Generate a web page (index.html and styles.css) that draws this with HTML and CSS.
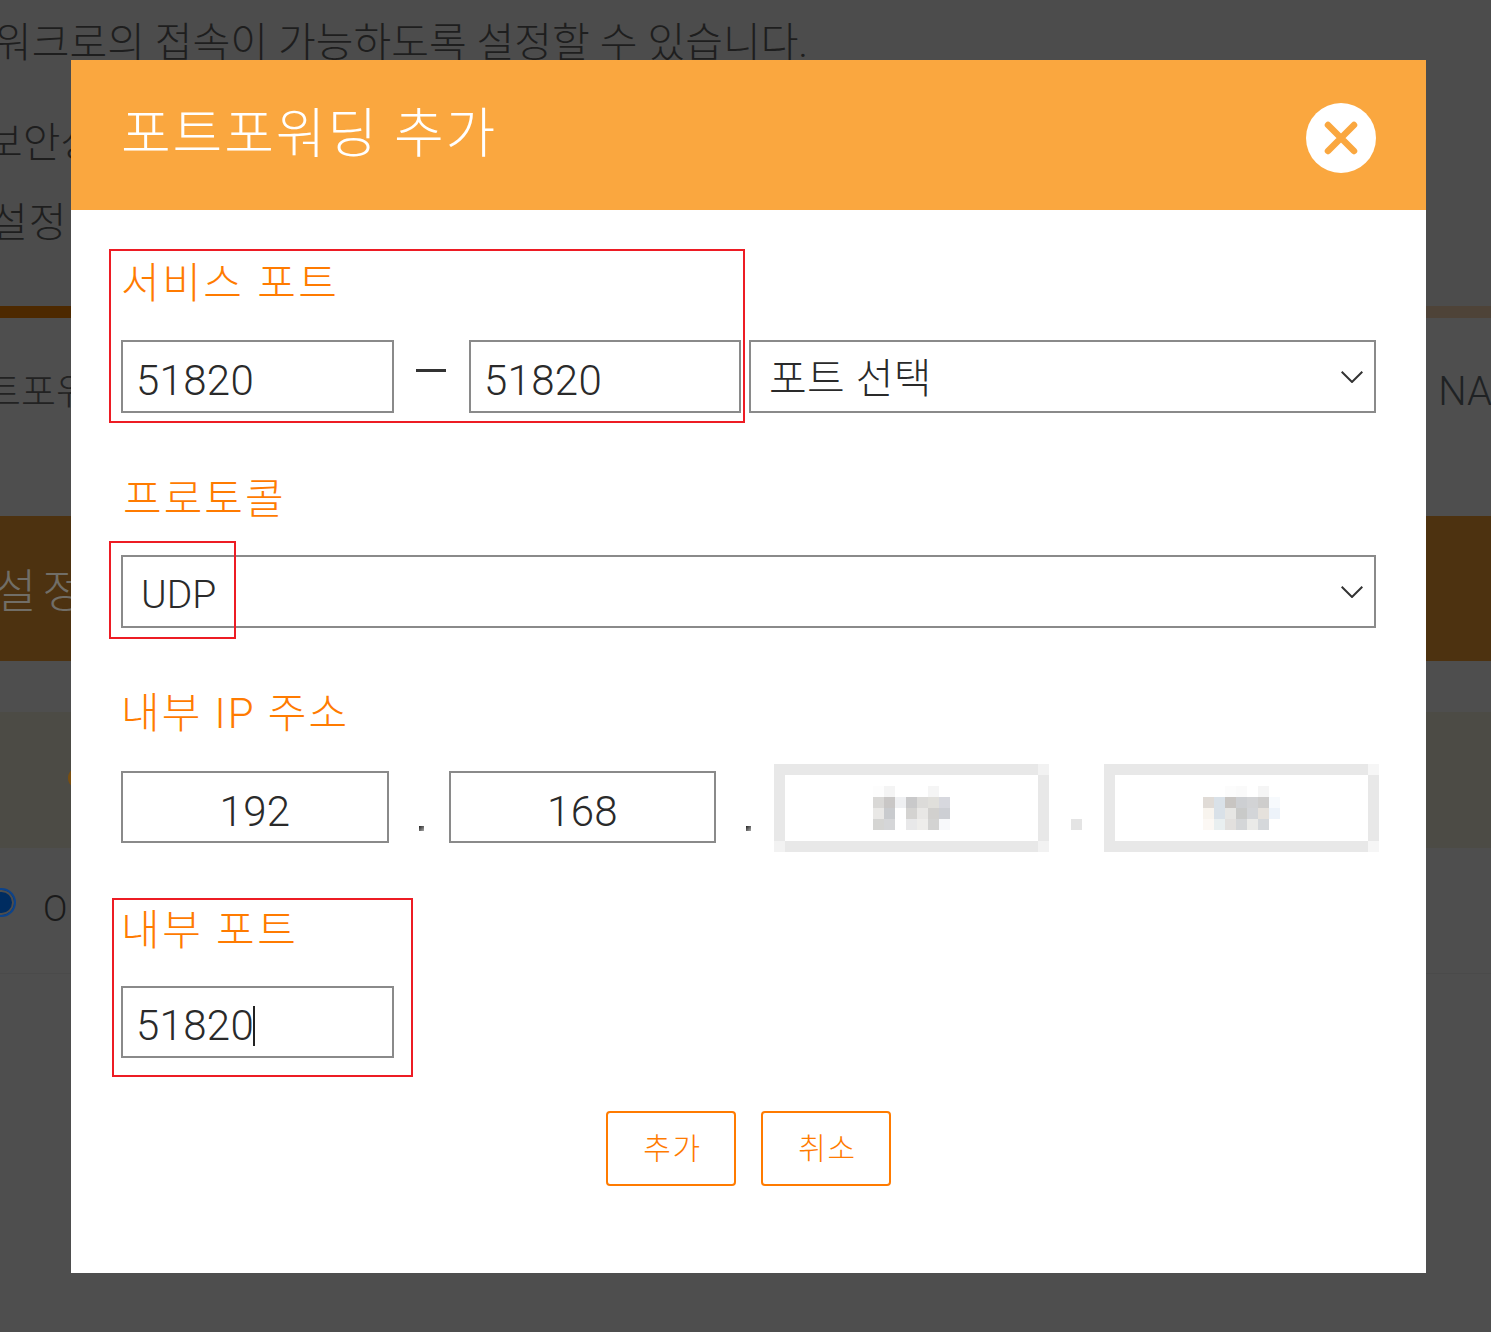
FILE: index.html
```html
<!DOCTYPE html>
<html lang="ko">
<head>
<meta charset="utf-8">
<title>포트포워딩 추가</title>
<link rel="stylesheet" href="styles.css">
</head>
<body>
<div class="page">
  <div class="bg-head">
    <p class="bg-line bg-line-a">워크로의 접속이 가능하도록 설정할 수 있습니다.</p>
    <p class="bg-line bg-line-b">보안상</p>
    <p class="bg-line bg-line-c">설정</p>
  </div>
  <div class="bg-bar"></div>
  <div class="bg-row bg-row-title"><span class="bg-tab">트포워</span><span class="bg-na">NA</span></div>
  <div class="bg-band"><span>설정</span></div>
  <div class="bg-gap"></div>
  <div class="bg-tint"><span class="bg-badge"></span></div>
  <div class="bg-radio"><span class="bg-dot"></span><span class="bg-off">O</span></div>

  <div class="modal">
    <header class="modal-head">
      <h1 class="modal-title">포트포워딩 추가</h1>
      <button class="close" type="button" aria-label="닫기">
        <svg width="70" height="70" viewBox="0 0 70 70"><circle cx="35" cy="35" r="35" fill="#fff"/><path d="M22 22L48 48M48 22L22 48" stroke="#faa73f" stroke-width="6.5" stroke-linecap="round"/></svg>
      </button>
    </header>
    <div class="modal-body">
      <div class="group group-service">
        <div class="mark mark-service"></div>
        <label class="label label-first">서비스 포트</label>
        <div class="row">
          <div class="field field-port">51820</div>
          <div class="dash"></div>
          <div class="field field-port2">51820</div>
          <div class="select select-port"><span class="select-text ko">포트 선택</span>
            <svg class="chev" width="22" height="12" viewBox="0 0 22 12"><path d="M.7.7L11 11 21.3.7" fill="none" stroke="#333" stroke-width="2"/></svg>
          </div>
        </div>
      </div>
      <div class="group group-proto">
        <div class="mark mark-proto"></div>
        <label class="label label-proto">프로토콜</label>
        <div class="select select-wide"><span class="select-text">UDP</span>
          <svg class="chev" width="22" height="12" viewBox="0 0 22 12"><path d="M.7.7L11 11 21.3.7" fill="none" stroke="#333" stroke-width="2"/></svg>
        </div>
      </div>
      <div class="group group-ip">
        <label class="label label-ip">내부 IP 주소</label>
        <div class="ip-row">
          <div class="field ip ip-a">192</div>
          <span class="ip-dot ip-dot-a"></span>
          <div class="field ip ip-b">168</div>
          <span class="ip-dot ip-dot-b"></span>
          <svg class="redact" width="275" height="88" viewBox="0 0 25 8" shape-rendering="crispEdges">
            <path d="M0 0h25v1H0zM0 7h25v1H0zM0 1h1v6H0zM24 1h1v6h-1z" fill="#e8e8e8"/>
            <path d="M24 0h1v1h-1zM24 7h1v1h-1zM0 7h1v1H0z" fill="#f2f2f2"/>
            <rect x="9" y="2" width="1" height="1" fill="#fdfdfd"/><rect x="10" y="2" width="1" height="1" fill="#f4f4f4"/><rect x="14" y="2" width="1" height="1" fill="#f5f5f5"/>
            <rect x="9" y="3" width="1" height="1" fill="#d9d8d6"/><rect x="10" y="3" width="1" height="1" fill="#c9c7c6"/><rect x="11" y="3" width="1" height="1" fill="#eff0f2"/><rect x="12" y="3" width="1" height="1" fill="#c9c9ca"/><rect x="13" y="3" width="1" height="1" fill="#dcdbd9"/><rect x="14" y="3" width="1" height="1" fill="#e0dfdb"/><rect x="15" y="3" width="1" height="1" fill="#d7d8de"/>
            <rect x="9" y="4" width="1" height="1" fill="#e9e8e6"/><rect x="10" y="4" width="1" height="1" fill="#c9cbce"/><rect x="12" y="4" width="1" height="1" fill="#d4d3d1"/><rect x="13" y="4" width="1" height="1" fill="#e8e7e5"/><rect x="14" y="4" width="1" height="1" fill="#d1d0ce"/><rect x="15" y="4" width="1" height="1" fill="#cdcfd4"/>
            <rect x="9" y="5" width="1" height="1" fill="#d5d5d3"/><rect x="10" y="5" width="1" height="1" fill="#d5d6d8"/><rect x="12" y="5" width="1" height="1" fill="#e8e8e9"/><rect x="13" y="5" width="1" height="1" fill="#eeedeb"/><rect x="14" y="5" width="1" height="1" fill="#d3d3d2"/><rect x="15" y="5" width="1" height="1" fill="#f8f9fb"/>
          </svg>
          <span class="ip-dot-redact"></span>
          <svg class="redact" width="275" height="88" viewBox="0 0 25 8" shape-rendering="crispEdges">
            <path d="M0 0h25v1H0zM0 7h25v1H0zM0 1h1v6H0zM24 1h1v6h-1z" fill="#e8e8e8"/>
            <path d="M24 0h1v1h-1zM24 7h1v1h-1z" fill="#f6f6f6"/>
            <rect x="11" y="2" width="1" height="1" fill="#fcfcfc"/><rect x="12" y="2" width="1" height="1" fill="#fafafa"/><rect x="14" y="2" width="1" height="1" fill="#f5f5f5"/>
            <rect x="9" y="3" width="1" height="1" fill="#e0dbd6"/><rect x="10" y="3" width="1" height="1" fill="#d9e1e8"/><rect x="11" y="3" width="1" height="1" fill="#c8c5c2"/><rect x="12" y="3" width="1" height="1" fill="#cdcfd2"/><rect x="13" y="3" width="1" height="1" fill="#d2d3d5"/><rect x="14" y="3" width="1" height="1" fill="#cecdcc"/><rect x="15" y="3" width="1" height="1" fill="#f7fafd"/>
            <rect x="9" y="4" width="1" height="1" fill="#f8f4ee"/><rect x="10" y="4" width="1" height="1" fill="#d9e1e8"/><rect x="11" y="4" width="1" height="1" fill="#e6e6e4"/><rect x="12" y="4" width="1" height="1" fill="#c9cac9"/><rect x="13" y="4" width="1" height="1" fill="#d3d5d8"/><rect x="14" y="4" width="1" height="1" fill="#e5e1dc"/><rect x="15" y="4" width="1" height="1" fill="#edf3fa"/>
            <rect x="9" y="5" width="1" height="1" fill="#fcf8f4"/><rect x="10" y="5" width="1" height="1" fill="#e9eff0"/><rect x="11" y="5" width="1" height="1" fill="#e2e0de"/><rect x="12" y="5" width="1" height="1" fill="#d4d6d8"/><rect x="13" y="5" width="1" height="1" fill="#eaeae8"/><rect x="14" y="5" width="1" height="1" fill="#d5d8db"/>
          </svg>
        </div>
      </div>
      <div class="group group-inner">
        <div class="mark mark-inner"></div>
        <label class="label label-inner">내부 포트</label>
        <div class="field field-port field-inner"><span class="narrow">51820</span><span class="caret"></span></div>
      </div>
      <div class="actions">
        <button class="btn" type="button">추가</button>
        <button class="btn" type="button">취소</button>
      </div>
    </div>
  </div>
</div>
</body>
</html>
```
FILE: styles.css
```css
* { box-sizing: border-box; }
html, body { margin: 0; padding: 0; }
body {
  background: #4d4d4d;
  font-family: Roboto, "Noto Sans CJK KR", sans-serif;
  font-weight: 300;
  color: #333;
}
.page {
  position: relative;
  width: 1491px;
  height: 1332px;
  overflow: hidden;
  background: #4e4e4e;
}
.bg-head { height: 306px; padding-top: 3px; background: #4c4c4c; color: #1e1e1e; }
.bg-line { margin: 0; font-size: 41px; line-height: 80px; white-space: nowrap; }
.bg-line-a { margin-left: -6px; }
.bg-line-b { margin-left: -15px; margin-top: 20px; }
.bg-line-c { margin-left: -10px; letter-spacing: 1px; }
.bg-bar { height: 12px; background: linear-gradient(90deg, #4d2900 0 40%, #4e4338 60% 100%); }
.bg-row { height: 198px; display: flex; justify-content: space-between; align-items: center; background: #4e4e4e; color: #222; font-size: 38px; }
.bg-tab { margin-left: -14px; margin-top: -58px; }
.bg-na { margin-right: -1px; margin-top: -52px; font-size: 40px; color: #1f2224; }
.bg-band { height: 145px; background: #4d3210; color: #716e67; font-size: 46px; display: flex; align-items: center; }
.bg-band span { margin-left: -6px; margin-top: -4px; letter-spacing: 6px; }
.bg-gap { height: 51px; background: #4e4e4e; }
.bg-tint { height: 136px; background: #4c4b45; padding-top: 55px; }
.bg-badge { display: block; width: 22px; height: 22px; margin-left: 68px; border-radius: 50%; background: #7a4f10; }
.bg-radio { height: 126px; border-bottom: 1px solid #4a4a4a; background: #4e4e4e; display: flex; align-items: flex-start; padding-top: 40px; gap: 30px; }
.bg-dot { width: 29px; height: 29px; margin-left: -13px; border-radius: 50%; background: #002c60; border: 2px solid #0d438a; box-shadow: inset 0 0 0 2px #4d4d4d; flex: none; }
.bg-off { color: #1a1a1a; font-size: 36px; line-height: 36px; margin-top: 3px; margin-left: -3px; }

.modal { position: absolute; left: 71px; top: 60px; width: 1355px; height: 1213px; background: #fff; }
.modal-head { height: 150px; background: #faa73f; display: flex; justify-content: space-between; align-items: flex-start; padding: 46px 50px 0 50px; }
.modal-title { margin: 0; font-size: 54px; font-weight: 300; line-height: 58px; color: #fff; letter-spacing: 1.9px; }
.close { width: 70px; height: 70px; padding: 0; border: 0; margin-top: -3px; background: none; display: block; }
.close svg { display: block; }
.modal-body { padding: 0 50px; display: flex; flex-direction: column; }
.group { position: relative; }
.label { display: block; height: 60px; line-height: 66px; font-size: 42px; letter-spacing: 2.5px; color: #ff7b00; font-weight: 300; }
.label-first { margin-top: 41px; margin-bottom: 29px; }
.label-proto { margin-top: 54px; margin-bottom: 28px; padding-left: 2px; letter-spacing: 2px; }
.label-ip { margin-top: 54px; margin-bottom: 22px; letter-spacing: 2px; line-height: 64px; }
.label-inner { margin-top: 46px; margin-bottom: 28px; }
.row { display: flex; align-items: flex-start; }
.field { border: 2px solid #8a8a8a; height: 73px; font-size: 42px; font-weight: 280; letter-spacing: .3px; line-height: 77px; color: #2a2a2a; background: #fff; flex: none; }
.field-port { width: 273px; padding-left: 13px; }
.field-port2 { width: 272px; padding-left: 13px; }
.dash { width: 30px; height: 3px; background: #333; margin: 29px 23px 0 22px; flex: none; }
.select { height: 73px; border: 2px solid #8a8a8a; display: flex; align-items: center; justify-content: space-between; padding: 0 11px 0 18px; }
.select-port { width: 627px; margin-left: 8px; flex: none; }
.select-wide { width: 1255px; }
.select-text { font-size: 39px; font-weight: 280; color: #2a2a2a; line-height: 1; padding-top: 7px; }
.select-text.ko { font-size: 41px; padding-top: 5px; letter-spacing: .4px; }
.chev { flex: none; }
.ip-row { display: flex; align-items: flex-start; }
.ip { height: 72px; text-align: center; margin-top: 7px; line-height: 77px; }
.ip-a { width: 268px; }
.ip-b { width: 267px; }
.ip-dot { width: 5px; height: 5px; background: linear-gradient(135deg, #222, #aaa); margin-top: 62px; flex: none; }
.ip-dot-a { margin-left: 30px; margin-right: 25px; }
.ip-dot-b { margin-left: 30px; margin-right: 23px; }
.redact { flex: none; display: block; }
.ip-dot-redact { width: 11px; height: 11px; background: #e4e4e4; margin: 55px 22px 0 22px; flex: none; }
.field-inner { height: 72px; display: flex; align-items: center; line-height: 1; padding-top: 8px; }
.narrow { display: inline-block; }
.caret { width: 2px; height: 40px; background: #222; flex: none; margin-left: -1px; }
.mark { position: absolute; border: 2px solid #ed1c24; z-index: 2; pointer-events: none; }
.mark-service { left: -12px; top: 39px; width: 636px; height: 174px; }
.mark-proto { left: -12px; top: 128px; width: 127px; height: 98px; }
.mark-inner { left: -9px; top: 46px; width: 301px; height: 179px; }
.actions { display: flex; justify-content: center; gap: 25px; margin-top: 53px; }
.btn { width: 130px; height: 75px; border: 2px solid #ff7b00; border-radius: 4px; background: #fff; color: #ff7b00; font: inherit; font-size: 30px; letter-spacing: 1.6px; padding: 0 0 6px 3px; }
```
